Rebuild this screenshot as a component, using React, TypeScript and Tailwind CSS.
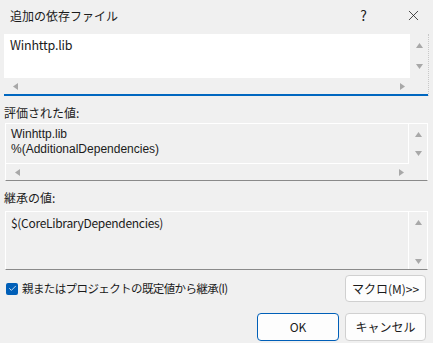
import { Check, X } from 'lucide-react';

const font = { fontFamily: '"Noto Sans CJK JP", "Noto Sans", sans-serif' };
const latin = { fontFamily: '"Liberation Sans", "Noto Sans", sans-serif' };

function Arrow({ dir }: { dir: 'up' | 'down' | 'left' | 'right' }) {
  const pts = {
    up: '0,6 3.5,1 7,6',
    down: '0,1 7,1 3.5,6',
    left: '6,0 6,7 1,3.5',
    right: '1,0 1,7 6,3.5',
  }[dir];
  return (
    <svg width="7" height="7" viewBox="0 0 7 7">
      <polygon points={pts} fill="#a8a8a8" />
    </svg>
  );
}

function VScroll({ className }: { className?: string }) {
  return (
    <div className={`flex w-[18px] flex-col items-center justify-between ${className ?? ''}`}>
      <Arrow dir="up" />
      <Arrow dir="down" />
    </div>
  );
}

function HScroll() {
  return (
    <div className="flex h-[16px] items-center justify-between pl-[8px] pr-[22px]">
      <Arrow dir="left" />
      <Arrow dir="right" />
    </div>
  );
}

export default function App() {
  return (
    <div
      className="flex h-[343px] w-[433px] flex-col bg-[#f0f0f0] text-[12px] text-[#1b1b1b]"
      style={font}
    >
      {/* title bar */}
      <div className="flex h-[31px] items-center pl-[10px]">
        <span className="flex-1">追加の依存ファイル</span>
        <span className="mr-[38px] text-[14px]">?</span>
        <X size={17} strokeWidth={1.1} className="mr-[11px]" />
      </div>

      {/* editable box */}
      <div className="mx-[4px] mt-[3px] flex flex-col border-r border-dotted border-[#c8c8c8]">
        <div className="flex h-[44px]">
          <div className="flex-1 bg-white px-[6px] pt-[3px] text-[12.5px] leading-[16px] tracking-[-0.2px]">Winhttp.lib</div>
          <VScroll className="py-[8px]" />
        </div>
        <HScroll />
        <div className="h-[2px] bg-[#0067c0]" />
      </div>

      <div className="mt-[8px] pl-[4px] leading-[17px]">評価された値:</div>

      {/* evaluated box */}
      <div className="mx-[5px] mt-[2px] flex h-[58px] flex-col border-x border-t border-white border-b border-b-[#8a8a8a]">
        <div className="flex h-[40px]">
          <div
            className="flex-1 border-r border-b border-white px-[5px] pt-[3px] text-[12px] leading-[15px]"
            style={latin}
          >
            <div>Winhttp.lib</div>
            <div>%(AdditionalDependencies)</div>
          </div>
          <VScroll className="py-[7px]" />
        </div>
        <HScroll />
      </div>

      <div className="mt-[8px] pl-[4px] leading-[17px]">継承の値:</div>

      {/* inherited box */}
      <div className="mx-[5px] mt-[5px] flex h-[59px] border-x border-t border-white border-b border-b-[#8a8a8a]">
        <div className="flex-1 border-r border-white px-[5px] pt-[3px] text-[12px] leading-[15px] tracking-[-0.3px]">
          $(CoreLibraryDependencies)
        </div>
        <VScroll className="pt-[7px] pb-[4px]" />
      </div>

      {/* checkbox row */}
      <div className="mt-[5px] flex items-start pr-[7px]">
        <div className="flex flex-1 items-center pl-[6px] pt-[5px]">
          <div className="flex h-[12px] w-[12px] items-center justify-center rounded-[2px] bg-[#005fb8]">
            <Check size={9} strokeWidth={2} color="#ffffff" />
          </div>
          <span className="ml-[4px] text-[11.5px] leading-[17px] tracking-[-0.6px]">親またはプロジェクトの既定値から継承(I)</span>
        </div>
        <button className="h-[27px] w-[81px] rounded-[4px] border border-[#d0d0d0] bg-[#fdfdfd] text-[12px]">
          マクロ(M)&gt;&gt;
        </button>
      </div>

      {/* bottom buttons */}
      <div className="mt-[11px] flex justify-end gap-[6px] pr-[7px]">
        <button className="h-[28px] w-[82px] rounded-[4px] border border-[#005fb8] bg-[#fdfdfd] text-[12px]">
          OK
        </button>
        <button className="h-[28px] w-[81px] rounded-[4px] border border-[#d0d0d0] bg-[#fdfdfd] text-[12px]">
          キャンセル
        </button>
      </div>
    </div>
  );
}
